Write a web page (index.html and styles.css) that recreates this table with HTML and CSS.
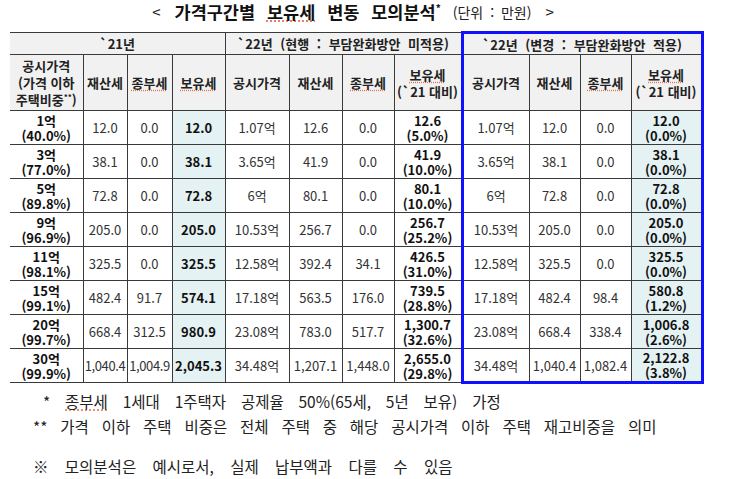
FILE: index.html
```html
<!DOCTYPE html>
<html lang="ko">
<head>
<meta charset="utf-8">
<link rel="stylesheet" href="styles.css">
</head>
<body>
<div class="title">
  <span class="br">&lt;</span>
  <span class="main"><span>가격구간별</span> <span class="sq">보유세</span> 변동 모의분석<sup>*</sup></span>
  <span class="unit">(단위 : 만원)</span>
  <span class="br">&gt;</span>
</div>
<table class="tbl">
  <colgroup>
    <col style="width:73px"><col style="width:44px"><col style="width:45px"><col style="width:53px">
    <col style="width:64px"><col style="width:53px"><col style="width:52px"><col style="width:68px">
    <col style="width:67px"><col style="width:51px"><col style="width:51px"><col style="width:71px">
  </colgroup>
  <thead>
    <tr class="h1">
      <th colspan="4" class="first">`21년</th>
      <th colspan="4">`22년 (현행 : 부담완화방안 미적용)</th>
      <th colspan="4" class="bl btop br2">`22년 (변경 : 부담완화방안 적용)</th>
    </tr>
    <tr class="h2">
      <th class="first">공시가격<br>(가격 이하<br>주택비중<sup>**</sup>)</th>
      <th>재산세</th>
      <th><span class="sq">종부세</span></th>
      <th><span class="sq">보유세</span></th>
      <th>공시가격</th>
      <th>재산세</th>
      <th><span class="sq">종부세</span></th>
      <th><span class="sq">보유세</span><br>(`21 대비)</th>
      <th class="bl">공시가격</th>
      <th>재산세</th>
      <th><span class="sq">종부세</span></th>
      <th class="br2"><span class="sq">보유세</span><br>(`21 대비)</th>
    </tr>
  </thead>
  <tbody>
    <tr><th class="first">1억<br>(40.0%)</th><td>12.0</td><td>0.0</td><td class="hl b">12.0</td><td>1.07억</td><td>12.6</td><td>0.0</td><td class="b">12.6<br>(5.0%)</td><td class="bl">1.07억</td><td>12.0</td><td>0.0</td><td class="hl b br2">12.0<br>(0.0%)</td></tr>
    <tr><th class="first">3억<br>(77.0%)</th><td>38.1</td><td>0.0</td><td class="hl b">38.1</td><td>3.65억</td><td>41.9</td><td>0.0</td><td class="b">41.9<br>(10.0%)</td><td class="bl">3.65억</td><td>38.1</td><td>0.0</td><td class="hl b br2">38.1<br>(0.0%)</td></tr>
    <tr><th class="first">5억<br>(89.8%)</th><td>72.8</td><td>0.0</td><td class="hl b">72.8</td><td>6억</td><td>80.1</td><td>0.0</td><td class="b">80.1<br>(10.0%)</td><td class="bl">6억</td><td>72.8</td><td>0.0</td><td class="hl b br2">72.8<br>(0.0%)</td></tr>
    <tr><th class="first">9억<br>(96.9%)</th><td>205.0</td><td>0.0</td><td class="hl b">205.0</td><td>10.53억</td><td>256.7</td><td>0.0</td><td class="b">256.7<br>(25.2%)</td><td class="bl">10.53억</td><td>205.0</td><td>0.0</td><td class="hl b br2">205.0<br>(0.0%)</td></tr>
    <tr><th class="first">11억<br>(98.1%)</th><td>325.5</td><td>0.0</td><td class="hl b">325.5</td><td>12.58억</td><td>392.4</td><td>34.1</td><td class="b">426.5<br>(31.0%)</td><td class="bl">12.58억</td><td>325.5</td><td>0.0</td><td class="hl b br2">325.5<br>(0.0%)</td></tr>
    <tr><th class="first">15억<br>(99.1%)</th><td>482.4</td><td>91.7</td><td class="hl b">574.1</td><td>17.18억</td><td>563.5</td><td>176.0</td><td class="b">739.5<br>(28.8%)</td><td class="bl">17.18억</td><td>482.4</td><td>98.4</td><td class="hl b br2">580.8<br>(1.2%)</td></tr>
    <tr><th class="first">20억<br>(99.7%)</th><td>668.4</td><td>312.5</td><td class="hl b">980.9</td><td>23.08억</td><td>783.0</td><td>517.7</td><td class="b">1,300.7<br>(32.6%)</td><td class="bl">23.08억</td><td>668.4</td><td>338.4</td><td class="hl b br2">1,006.8<br>(2.6%)</td></tr>
    <tr class="last"><th class="first">30억<br>(99.9%)</th><td class="tight">1,040.4</td><td class="tight">1,004.9</td><td class="hl b">2,045.3</td><td>34.48억</td><td>1,207.1</td><td>1,448.0</td><td class="b">2,655.0<br>(29.8%)</td><td class="bl bbot">34.48억</td><td class="bbot">1,040.4</td><td class="bbot">1,082.4</td><td class="hl b br2 bbot">2,122.8<br>(3.8%)</td></tr>
  </tbody>
</table>
<div class="notes">
  <p class="n1">* <span class="sq">종부세</span> 1세대 1주택자 공제율 50%(65세, 5년 보유) 가정</p>
  <p class="n2">** 가격 이하 주택 비중은 전체 주택 중 해당 공시가격 이하 주택 재고비중을 의미</p>
  <p class="n3">※ 모의분석은 예시로서, 실제 납부액과 다를 수 있음</p>
</div>
</body>
</html>
```

FILE: styles.css
```css
html, body {
  margin: 0;
  padding: 0;
  background: #ffffff;
}
body {
  width: 730px;
  height: 479px;
  overflow: hidden;
  font-family: "Noto Sans CJK KR", "Noto Sans", sans-serif;
  color: #222;
}
.title {
  height: 31px;
  display: flex;
  align-items: flex-start;
  justify-content: center;
  box-sizing: border-box;
  padding-top: 1px;
  padding-right: 24px;
  line-height: 22px;
}
.title .br {
  font-size: 15px;
  color: #222;
}
.title .br:first-child {
  margin-right: 14px;
}
.title .br:last-child {
  margin-left: 14px;
}
.title .main {
  font-size: 17.5px;
  font-weight: 700;
  color: #111;
  word-spacing: 7px;
}
.title .main sup {
  font-size: 10px;
  vertical-align: 7px;
  line-height: 0;
}
.title .unit {
  font-size: 14px;
  color: #222;
  word-spacing: 3px;
  margin-left: 12px;
}
.sq {
  text-decoration: underline dotted #e07050;
  text-underline-offset: 2px;
}
.tbl {
  border-collapse: collapse;
  table-layout: fixed;
  width: 692px;
  margin-left: 10px;
  font-size: 13px;
  line-height: 15px;
}
.tbl th, .tbl td {
  border: 1px solid #3a3a3a;
  padding: 0;
  text-align: center;
  vertical-align: middle;
  white-space: nowrap;
}
.tbl .first {
  border-left: none;
}
.tbl thead th {
  background: #f1f1f1;
  font-weight: 700;
  color: #222;
}
.tbl tr.h1 th {
  height: 20px;
  border-top: 1px solid #3a3a3a;
  font-size: 13px;
  word-spacing: 4px;
}
.tbl tr.h2 th {
  height: 55px;
  line-height: 17px;
  font-size: 13px;
}
.tbl tr.h2 th sup {
  font-size: 8px;
  line-height: 0;
  vertical-align: 5px;
}
.tbl tbody tr {
  height: 34px;
}
.tbl tbody th {
  font-weight: 700;
  color: #111;
  background: #fff;
  line-height: 15px;
}
.tbl tbody td {
  color: #333;
  font-size: 13px;
  line-height: 15px;
}
.tbl tbody td.b {
  font-weight: 700;
  color: #111;
}
.tbl tbody td.hl {
  background: #e5f2f4;
}
.tbl td.tight {
  letter-spacing: -0.4px;
}
.tbl .bl {
  border-left: 3px solid #1010ff;
}
.tbl .br2 {
  border-right: 3px solid #1010ff;
}
.tbl .btop {
  border-top: 3px solid #1010ff !important;
}
.tbl .bbot {
  border-bottom: 3px solid #1010ff;
}
.notes {
  margin-top: 5px;
  color: #222;
  font-size: 15.5px;
  line-height: 25px;
}
.notes p {
  margin: 0;
  word-spacing: 8.5px;
}
.notes .n1 {
  padding-left: 43px;
  word-spacing: 10.5px;
}
.notes .n2 {
  padding-left: 33px;
}
.notes .n3 {
  padding-left: 33px;
  margin-top: 15px;
  word-spacing: 12px;
}
```
